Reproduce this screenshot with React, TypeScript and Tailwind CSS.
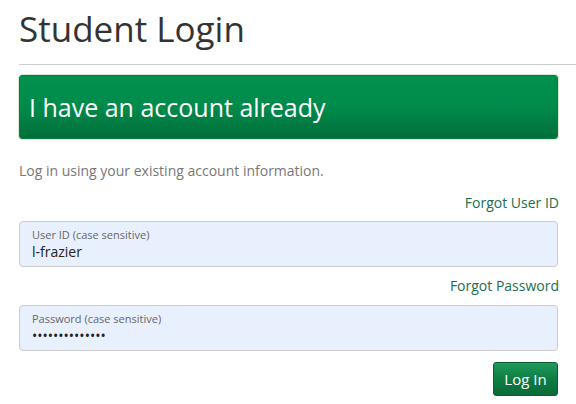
import React from "react";

export default function App() {
  return (
    <div className="w-[576px] h-[404px] bg-white overflow-hidden pl-[19px]" style={{ fontFamily: '"Open Sans", sans-serif' }}>
      <h1 className="mt-[9px] text-[35px] leading-[40px] text-[#333] font-normal">Student Login</h1>
      <div className="mt-[15px] h-px bg-[#ccc]" />
      <div className="pr-[18px]">
        <div className="mt-[10px] h-[64px] rounded-[3px] border border-[#0a7a42] bg-gradient-to-b from-[#00904f] via-[#008b4b] to-[#006e3a] flex items-center px-[9px] shadow-[0_0_0_1px_#d9ead0]">
          <span className="text-[25px] text-white leading-none">I have an account already</span>
        </div>
        <p className="mt-[22px] text-[14px] leading-[20px] text-[#777]">Log in using your existing account information.</p>
        <div className="mt-[12px] -mr-px text-right text-[14px] leading-[20px] text-[#1b6e4e]">Forgot User ID</div>
        <div className="mt-[8px] h-[46px] rounded-[4px] border border-[#ccc] bg-[#e8f0fe] px-[12px] pt-[6px]">
          <div className="text-[11px] leading-[14px] text-[#666]">User ID (case sensitive)</div>
          <div className="text-[14px] leading-[20px] text-[#222]">l-frazier</div>
        </div>
        <div className="mt-[9px] -mr-px text-right text-[14px] leading-[20px] text-[#1b6e4e]">Forgot Password</div>
        <div className="mt-[9px] h-[46px] rounded-[4px] border border-[#ccc] bg-[#e8f0fe] px-[12px] pt-[6px]">
          <div className="text-[11px] leading-[14px] text-[#666]">Password (case sensitive)</div>
          <div className="text-[14px] leading-[20px] text-[#222]">••••••••••••••</div>
        </div>
        <div className="mt-[11px] flex justify-end">
          <button className="h-[34px] w-[65px] rounded-[3px] border border-[#0b5e33] bg-gradient-to-b from-[#1f9a5a] via-[#0f7d43] to-[#0a6a38] text-white text-[15px]">Log In</button>
        </div>
      </div>
    </div>
  );
}
